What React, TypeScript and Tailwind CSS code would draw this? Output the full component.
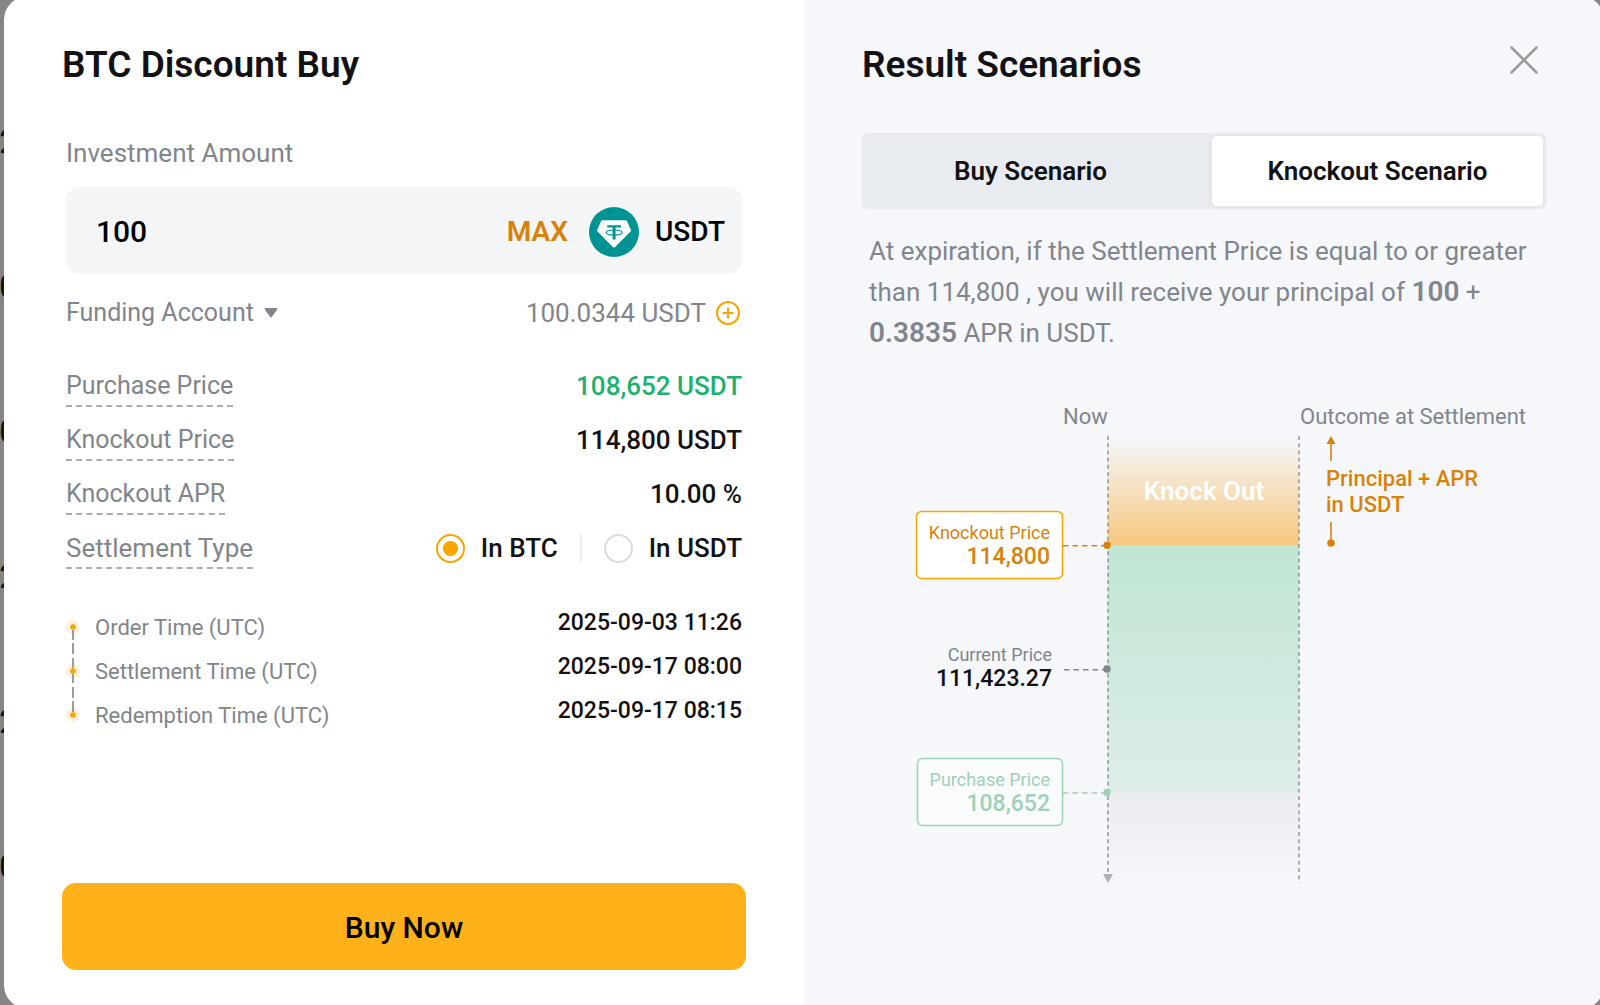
import React, { useState } from 'react';

type Settlement = 'BTC' | 'USDT';
type Scenario = 'buy' | 'knockout';

const priceRows = [
  { label: 'Purchase Price', value: '108,652 USDT', color: 'text-[#20b26c]' },
  { label: 'Knockout Price', value: '114,800 USDT', color: 'text-[#121214]' },
  { label: 'Knockout APR', value: '10.00 %', color: 'text-[#121214]' },
];

const timeRows = [
  { label: 'Order Time (UTC)', value: '2025-09-03 11:26' },
  { label: 'Settlement Time (UTC)', value: '2025-09-17 08:00' },
  { label: 'Redemption Time (UTC)', value: '2025-09-17 08:15' },
];

// digits of the page that peek out from behind the dialog
const backdropDigits = ['2', '0', '0', '2', '2', '0'];

function TetherIcon() {
  return (
    <svg viewBox="0 0 50 50" className="size-[50px] shrink-0" aria-hidden="true">
      <circle cx="25" cy="25" r="25" fill="#009393" />
      <path d="M13.4 13.3h23.2c.6 0 1 .3 1.3.8l4 8.8c.3.6.2 1.2-.3 1.6L25.8 40.2c-.5.5-1.2.5-1.700 0L8.400 24.500c-.5-.4-.6-1-.3-1.600l4-8.800c.3-.5.7-.8 1.300-.8z" fill="#fff" />
      <path d="M18.200 18.200h13.800v2.400h-5.400v12h-3v-12h-5.400z" fill="#009393" />
      <ellipse cx="25.100" cy="25.500" rx="8" ry="2.500" fill="none" stroke="#009393" strokeWidth="1.200" />
    </svg>
  );
}

function TimelineDots() {
  return (
    <svg viewBox="0 0 14 126" className="h-[126px] w-3.5 shrink-0" aria-hidden="true">
      {[21, 65, 109].map(y => <circle key={y} cx="7" cy={y} r="7" fill="#fff0d9" />)}
      <path d="M7 24v10M7 37v11M7 52v10M7 68v9M7 81v11M7 95v11" stroke="#81858c" strokeWidth="1.600" />
      {[21, 65, 109].map(y => <circle key={y} cx="7" cy={y} r="2.800" fill="#f7a600" />)}
    </svg>
  );
}

function ScenarioChart() {
  return (
    <svg viewBox="0 0 684 490" className="mt-[46px] w-full font-[Roboto,sans-serif]" role="img" aria-label="Knockout scenario">
      <defs>
        <linearGradient id="knock" x1="0" y1="0" x2="0" y2="1">
          <stop offset="0" stopColor="#f7c77f" stopOpacity="0" />
          <stop offset="1" stopColor="#f7c77f" />
        </linearGradient>
        <linearGradient id="hold" x1="0" y1="0" x2="0" y2="1">
          <stop offset="0" stopColor="#c0e5d3" />
          <stop offset="1" stopColor="#ddeee8" />
        </linearGradient>
        <linearGradient id="below" x1="0" y1="0" x2="0" y2="1">
          <stop offset="0" stopColor="#ebecf0" />
          <stop offset="1" stopColor="#ebecf0" stopOpacity="0" />
        </linearGradient>
      </defs>

      <rect x="246" y="37" width="191" height="108" fill="url(#knock)" />
      <rect x="246" y="145" width="191" height="247" fill="url(#hold)" />
      <rect x="246" y="392" width="191" height="93" fill="url(#below)" />

      <g fill="none" stroke="#81858c" strokeOpacity="0.8" strokeWidth="1.6" strokeDasharray="4 3.2">
        <path d="M246 36V474" />
        <path d="M437 36V483" />
      </g>
      <path d="M241 474h10l-5 9z" fill="#adb1b8" />

      <g fontSize="22" fill="#81858c">
        <text x="201" y="24">Now</text>
        <text x="438" y="24">Outcome at Settlement</text>
      </g>
      <text x="342" y="100" fontSize="26" fontWeight="600" fill="#fff" textAnchor="middle">Knock Out</text>

      {/* knockout price */}
      <rect x="54.5" y="111.5" width="146" height="67" rx="5" fill="#fff" stroke="#f7a600" strokeWidth="1.5" />
      <g fill="#d9820a" textAnchor="end">
        <text x="188" y="139" fontSize="18">Knockout Price</text>
        <text x="188" y="164" fontSize="23" fontWeight="500">114,800</text>
      </g>
      <path d="M201 145.7H242" stroke="#d9820a" strokeWidth="1.6" strokeDasharray="5.5 4" />
      <circle cx="245" cy="145.3" r="3.7" fill="#d9820a" />

      {/* current price */}
      <g textAnchor="end">
        <text x="190" y="261" fontSize="18" fill="#81858c">Current Price</text>
        <text x="190" y="286" fontSize="23" fontWeight="500" fill="#121214">111,423.27</text>
      </g>
      <path d="M202 269.7H242" stroke="#81858c" strokeWidth="1.6" strokeDasharray="5.5 4" />
      <circle cx="245" cy="269" r="3.7" fill="#81858c" />

      {/* purchase price */}
      <rect x="55.5" y="358.5" width="145" height="67" rx="5" fill="#f9fbfd" stroke="#9fd1b6" strokeWidth="1.5" />
      <g fill="#9fd1b6" textAnchor="end">
        <text x="188" y="386" fontSize="18">Purchase Price</text>
        <text x="188" y="411" fontSize="23" fontWeight="500">108,652</text>
      </g>
      <path d="M201 393H242" stroke="#9fd1b6" strokeWidth="1.6" strokeDasharray="5.5 4" />
      <circle cx="245" cy="392.5" r="3.7" fill="#9fd1b6" />

      {/* outcome range */}
      <g fill="#d9820a">
        <path d="M469 36l4.5 8h-9z" />
        <path d="M469 42V61M469 122V142" stroke="#d9820a" strokeWidth="1.6" />
        <circle cx="469" cy="143" r="3.8" />
        <text x="464" y="86" fontSize="22" fontWeight="500">Principal + APR</text>
        <text x="464" y="112" fontSize="22" fontWeight="500">in USDT</text>
      </g>
    </svg>
  );
}

export default function App() {
  const [amount, setAmount] = useState('100');
  const [settlement, setSettlement] = useState<Settlement>('BTC');
  const [scenario, setScenario] = useState<Scenario>('knockout');

  const tabClass = (active: boolean) =>
    active
      ? 'rounded-[5px] bg-white text-[26px] font-semibold shadow-[0_0_6px_rgba(0,0,0,0.06)]'
      : 'rounded-[5px] text-[26px] font-semibold';

  return (
    <div className="relative flex min-h-screen overflow-hidden bg-[#858585] font-[Roboto,sans-serif] text-[#121214]">
      <div className="absolute top-[69px] -left-px text-[34px] leading-[145px]" aria-hidden="true">
        {backdropDigits.map((d, i) => <div key={i}>{d}</div>)}
      </div>

      <div role="dialog" aria-label="BTC Discount Buy" className="relative -my-1 -mr-1 ml-1 grid flex-1 grid-cols-2 overflow-hidden rounded-3xl bg-white">
        {/* Order form */}
        <form className="flex flex-col px-[58px] pt-[47px] pb-[39px]" onSubmit={e => e.preventDefault()}>
          <h2 className="text-[37px] leading-11 font-semibold">BTC Discount Buy</h2>

          <div className="px-1">
            <label htmlFor="amount" className="mt-[50px] block text-[26px] leading-8 text-[#81858c]">Investment Amount</label>
            <div className="mt-[18px] flex h-[87px] items-center rounded-[14px] bg-[#f3f5f7] pt-0.5 pr-[17px] pl-[30px] text-[28px] font-medium">
              <input
                id="amount"
                value={amount}
                onChange={e => setAmount(e.target.value)}
                className="min-w-0 flex-1 bg-transparent text-[30px] text-black outline-none"
              />
              <button type="button" onClick={() => setAmount('100.0344')} className="mr-[21px] font-semibold text-[#d9820a]">MAX</button>
              <TetherIcon />
              <span className="ml-4 text-black">USDT</span>
            </div>

            <div className="mt-[23px] flex items-center justify-between text-[26px] leading-8 text-[#81858c]">
              <div className="relative flex items-center">
                <select aria-label="Account" className="appearance-none bg-transparent pr-7 text-[25px] outline-none">
                  <option>Funding Account</option>
                </select>
                <svg viewBox="0 0 14 12" className="pointer-events-none absolute right-1 h-3 w-3.5" aria-hidden="true">
                  <path d="M1.5 1h11c.8 0 1.2.8.7 1.4L7.8 10c-.4.6-1.200.6-1.600 0L.8 2.400C.3 1.800.7 1 1.500 1z" fill="#81858c" />
                </svg>
              </div>
              <div className="flex items-center gap-2.5 pr-0.5">
                <span>100.0344 USDT</span>
                <button type="button" aria-label="Add funds">
                  <svg viewBox="0 0 24 24" className="size-6" fill="none" stroke="#f7a600" strokeWidth="2" aria-hidden="true">
                    <circle cx="12" cy="12" r="11" />
                    <path d="M12 6.5v11M6.5 12h11" />
                  </svg>
                </button>
              </div>
            </div>

            <div className="mt-[41px] flex flex-col gap-[17px] text-[26px] leading-8">
              {priceRows.map(row => (
                <div key={row.label} className="flex items-start justify-between">
                  <span className="border-b-2 border-dashed border-[#a9adb3] pb-[3px] text-[25px] text-[#81858c]">{row.label}</span>
                  <span className={`font-medium ${row.color}`}>{row.value}</span>
                </div>
              ))}
              <div className="flex items-start justify-between">
                <span className="border-b-2 border-dashed border-[#a9adb3] pb-[3px] text-[#81858c]">Settlement Type</span>
                <div className="flex items-center gap-[22px] font-medium">
                  {(['BTC', 'USDT'] as Settlement[]).map((type, i) => (
                    <React.Fragment key={type}>
                      {i > 0 && <span className="h-7 w-0.5 bg-[#e8ebf0]" />}
                      <label className="flex items-center gap-4">
                        <input
                          type="radio"
                          name="settlement"
                          checked={settlement === type}
                          onChange={() => setSettlement(type)}
                          className="size-[29px] appearance-none rounded-full border-2 border-[#dcdcdc] checked:border-[#f7a600] checked:bg-[radial-gradient(circle,#f7a600_7px,transparent_8px)]"
                        />
                        In {type}
                      </label>
                    </React.Fragment>
                  ))}
                </div>
              </div>
            </div>

            <div className="mt-[37px] flex gap-[15px]">
              <TimelineDots />
              <dl className="flex flex-1 flex-col gap-1.5">
                {timeRows.map(row => (
                  <div key={row.label} className="flex h-[38px] justify-between">
                    <dt className="self-end text-[22px] leading-8 text-[#81858c]">{row.label}</dt>
                    <dd className="text-[23px] leading-[34px] font-medium">{row.value}</dd>
                  </div>
                ))}
              </dl>
            </div>
          </div>

          <button type="submit" className="mt-auto h-[87px] rounded-[14px] bg-[#ffb11a] pt-0.5 text-[30px] font-medium text-black">Buy Now</button>
        </form>

        {/* Scenarios */}
        <section className="bg-[#f5f7fb] px-[58px] pt-[47px] pb-[39px]">
          <div className="flex items-start justify-between">
            <h2 className="text-[37px] leading-11 font-semibold">Result Scenarios</h2>
            <button type="button" aria-label="Close" className="flex h-[34px] w-11 items-center justify-center">
              <svg viewBox="0 0 30 30" className="size-[30px]" stroke="#999" strokeWidth="2.5" strokeLinecap="round" aria-hidden="true">
                <path d="M2.5 2.5l25 25M27.5 2.5l-25 25" />
              </svg>
            </button>
          </div>

          <div role="tablist" className="mt-[46px] grid h-[76px] grid-cols-2 gap-4 rounded-md bg-[#e8ebf0] p-[3px]">
            <button type="button" role="tab" aria-selected={scenario === 'buy'} onClick={() => setScenario('buy')} className={tabClass(scenario === 'buy')}>
              Buy Scenario
            </button>
            <button type="button" role="tab" aria-selected={scenario === 'knockout'} onClick={() => setScenario('knockout')} className={tabClass(scenario === 'knockout')}>
              Knockout Scenario
            </button>
          </div>

          <p className="mt-[22px] pl-[7px] text-[26px] leading-[41px] text-[#81858c]">
            At expiration, if the Settlement Price is equal to or greater than 114,800 , you will receive your principal of{' '}
            <b className="text-[28px] leading-none font-semibold">100</b> + <b className="text-[28px] leading-none font-semibold">0.3835</b> APR in USDT.
          </p>

          <ScenarioChart />
        </section>
      </div>
    </div>
  );
}
